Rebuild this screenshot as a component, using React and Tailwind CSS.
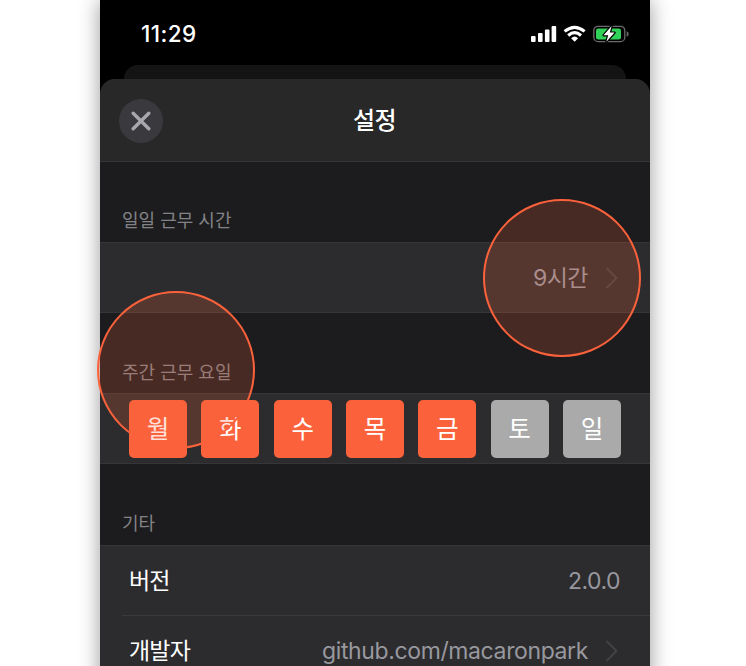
import React from "react";

const DAYS = [
  { label: "월", on: true },
  { label: "화", on: true },
  { label: "수", on: true },
  { label: "목", on: true },
  { label: "금", on: true },
  { label: "토", on: false },
  { label: "일", on: false },
];

function Chevron() {
  return (
    <svg className="mr-px ml-[17px] h-[22px] w-[14px] shrink-0" viewBox="0 0 14 22" fill="none" stroke="#434346" strokeWidth="1.9">
      <path d="M1.5 1 L11.5 11 L1.5 21" />
    </svg>
  );
}

function StatusBar() {
  return (
    <div className="flex h-[65px] items-start justify-between pt-[22px] pr-[21px] pl-[41px]">
      <span className="font-['Inter',sans-serif] text-[22.5px] leading-6 font-medium tracking-[0.4px] text-white">11:29</span>
      <svg className="mt-[2px] h-5 w-[98px]" viewBox="531 24 98 20">
        <g fill="#fff">
          <rect x="531" y="36" width="4.6" height="6" rx="1" />
          <rect x="538" y="33" width="4.6" height="9" rx="1" />
          <rect x="544.9" y="29.5" width="4.6" height="12.5" rx="1" />
          <rect x="551.6" y="26" width="4.6" height="16" rx="1" />
          <path d="M571.1 38.2 Q574.6 35 578.1 38.2 L574.6 41.8 Z" />
        </g>
        <g fill="none" stroke="#fff" strokeWidth="3.1">
          <path d="M564.6 31.4 Q574.6 23.2 584.6 31.4" />
          <path d="M568.2 35.5 Q574.6 29.7 581 35.5" />
        </g>
        <rect x="593.8" y="26.3" width="31" height="15.3" rx="4.2" fill="none" stroke="#6b6b6b" strokeWidth="1.3" />
        <rect x="596" y="28.4" width="25" height="11.2" rx="2.3" fill="#30d158" />
        <path d="M626.7 31.2 Q628.7 32 628.7 34 Q628.7 36 626.7 36.8 Z" fill="#6b6b6b" />
        <path d="M611.6 26 L603.6 35.2 H608.2 L606.4 41.8 L614.6 32.6 H609.8 Z" fill="#fff" stroke="#000" strokeWidth="2.4" strokeLinejoin="round" paintOrder="stroke" />
      </svg>
    </div>
  );
}

function SectionLabel({ children }) {
  return <h2 className="pl-[22px] text-[18px] leading-6 font-normal text-[#828287]">{children}</h2>;
}

export default function App() {
  return (
    <div className="relative flex h-[666px] w-[746px] overflow-hidden bg-white font-['Inter','Noto_Sans_CJK_KR',sans-serif]">
      <div className="ml-[100px] flex h-[690px] w-[550px] shrink-0 flex-col bg-black shadow-[0_0_20px_rgba(0,0,0,0.4)]">
        <StatusBar />
        <div className="mx-6 h-[14px] shrink-0 rounded-t-[14px] bg-[#141414]" />
        <main className="flex flex-1 flex-col overflow-hidden rounded-t-[15px] bg-[#1c1c1e]">
          <header className="grid h-[83px] shrink-0 grid-cols-[64px_1fr_64px] items-center border-b border-[#363638] bg-[#282828] pt-[2px]">
            <button className="ml-[19px] flex size-11 items-center justify-center rounded-full bg-[#3a393e]">
              <svg className="size-5" viewBox="0 0 20 20" fill="none" stroke="#a8a7ae" strokeWidth="3.4" strokeLinecap="round">
                <path d="M2.2 2.2 L17.8 17.8 M17.8 2.2 L2.2 17.8" />
              </svg>
            </button>
            <h1 className="pr-px text-center text-[24px] leading-8 font-medium tracking-[-0.5px] text-white">설정</h1>
          </header>

          <section className="flex h-[151px] shrink-0 flex-col">
            <div className="h-20 shrink-0 pt-[47px]"><SectionLabel>일일 근무 시간</SectionLabel></div>
            <div className="flex h-[71px] items-center justify-end border-y border-[#363638] bg-[#2c2c2e] pr-[30px] text-[23px] text-[#98989f]">
              <span className="pt-px tracking-[-0.5px]">9시간</span>
              <Chevron />
            </div>
          </section>

          <section className="flex h-[151px] shrink-0 flex-col">
            <div className="h-20 shrink-0 pt-[48px]"><SectionLabel>주간 근무 요일</SectionLabel></div>
            <div className="flex h-[71px] items-center justify-between border-y border-[#363638] bg-[#2c2c2e] pt-px pr-[29px] pl-[29px]">
              {DAYS.map((day) => (
                <span
                  key={day.label}
                  className={`flex h-[58px] w-[58px] items-center justify-center rounded-[5px] text-[24.5px] leading-none font-normal text-white ${day.on ? "bg-[#fb623c]" : "bg-[#aaaaaa]"}`}
                >
                  {day.label}
                </span>
              ))}
            </div>
          </section>

          <section className="flex flex-col">
            <div className="h-[81px] shrink-0 pt-[48px]"><SectionLabel>기타</SectionLabel></div>
            <div className="flex flex-col border-t border-[#363638] bg-[#2c2c2e] text-[23px] leading-8">
              <div className="flex h-[69px] items-center justify-between pr-[30px] pl-[29px]">
                <span className="tracking-[-0.8px] text-white">버전</span>
                <span className="tracking-[-0.5px] text-[#98989f]">2.0.0</span>
              </div>
              <div className="ml-[22px] h-px bg-[#3a3a3c]" />
              <div className="flex h-[71px] items-center pr-[30px] pb-px pl-[29px]">
                <span className="tracking-[-0.8px] text-white">개발자</span>
                <span className="ml-auto tracking-[-0.38px] text-[#98989f]">github.com/macaronpark</span>
                <Chevron />
              </div>
            </div>
          </section>
        </main>
      </div>

      {/* Highlight rings over the settings being explained */}
      <div className="absolute top-[199px] left-[483px] size-[158px] rounded-full border-2 border-[#fb623c] bg-[#fb623c]/20" />
      <div className="absolute top-[291px] left-[97px] size-[158px] rounded-full border-2 border-[#fb623c] bg-[#fb623c]/20" />
    </div>
  );
}
